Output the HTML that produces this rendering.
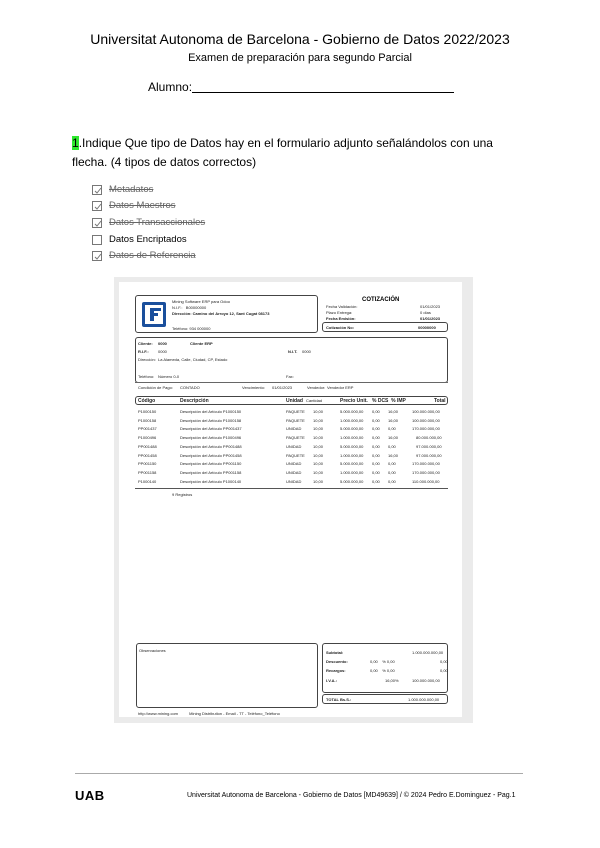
<!DOCTYPE html>
<html><head><meta charset="utf-8"><style>
*{margin:0;padding:0;box-sizing:border-box}
body{width:600px;height:848px;background:#fff;position:relative;font-family:"Liberation Sans",sans-serif;color:#000;overflow:hidden}
.a{position:absolute;white-space:nowrap}
.cb{position:absolute;width:10px;height:10px;border:1px solid #777;left:92px}
.cb svg{position:absolute;left:0;top:0}
.lbl{position:absolute;left:109px;font-size:9.5px;color:#666;text-decoration:line-through}
.t{font-size:4px;color:#222}
.box{position:absolute;border:1px solid #444;border-radius:3px}
.row{position:absolute;left:0;height:8px;font-size:4px;color:#222}
.row span{position:absolute;white-space:nowrap}
</style></head><body>
<div class="a" style="left:0;width:600px;text-align:center;top:31px;font-size:14px">Universitat Autonoma de Barcelona - Gobierno de Datos 2022/2023</div>
<div class="a" style="left:0;width:600px;text-align:center;top:52px;font-size:11px">Examen de preparación para segundo Parcial</div>
<div class="a" style="left:148px;top:80px;font-size:12px">Alumno:</div>
<div class="a" style="left:192px;top:92px;width:262px;border-top:1px solid #000"></div>

<div class="a" style="left:72px;top:136px;font-size:12px"><span style="background:#2ee82e">1</span>.Indique Que tipo de Datos hay en el formulario adjunto señalándolos con una</div>
<div class="a" style="left:72px;top:155px;font-size:12px">flecha. (4 tipos de datos correctos)</div>

<div class="cb" style="top:185px"><svg width="10" height="10"><path d="M2 5l2 2 4-5" stroke="#777" fill="none"/></svg></div>
<div class="lbl" style="top:184px">Metadatos</div>
<div class="cb" style="top:201px"><svg width="10" height="10"><path d="M2 5l2 2 4-5" stroke="#777" fill="none"/></svg></div>
<div class="lbl" style="top:200px">Datos Maestros</div>
<div class="cb" style="top:218px"><svg width="10" height="10"><path d="M2 5l2 2 4-5" stroke="#777" fill="none"/></svg></div>
<div class="lbl" style="top:217px">Datos Transaccionales</div>
<div class="cb" style="top:235px"></div>
<div class="lbl" style="top:234px;color:#000;text-decoration:none">Datos Encriptados</div>
<div class="cb" style="top:251px"><svg width="10" height="10"><path d="M2 5l2 2 4-5" stroke="#777" fill="none"/></svg></div>
<div class="lbl" style="top:250px">Datos de Referencia</div>

<!-- image -->
<div class="a" style="left:114px;top:277px;width:359px;height:446px;background:#ebebeb"></div>
<div class="a" style="left:119px;top:282px;width:343px;height:435px;background:#fff"></div>

<div class="box" style="left:135px;top:295px;width:183px;height:38px"></div>
<div class="a" style="left:142px;top:302px;width:24px;height:25px;background:#1a4f9c;border-radius:2px"></div>
<div class="a" style="left:145px;top:305px;width:18px;height:19px;background:#fff"></div>
<div class="a" style="left:150px;top:308px;width:11px;height:13px;border-left:4px solid #1a4f9c;border-top:3px solid #1a4f9c"></div>
<div class="a" style="left:150px;top:313px;width:8px;height:3px;background:#1a4f9c"></div>
<div class="a t" style="left:172px;top:299px">Mining Software ERP para Odoo</div>
<div class="a t" style="left:172px;top:305px">N.I.F.: &nbsp; B00000000</div>
<div class="a t" style="left:172px;top:311px;font-weight:bold">Dirección: Camino del Arroyo 12, Sant Cugat 08173</div>
<div class="a t" style="left:172px;top:326px">Teléfono: 934 000000</div>
<div class="a" style="left:362px;top:297px;font-size:6px;font-weight:bold">COTIZACIÓN</div>
<div class="a t" style="left:326px;top:304px">Fecha Validación:</div><div class="a t" style="left:420px;top:304px">01/01/2023</div>
<div class="a t" style="left:326px;top:310px">Plazo Entrega:</div><div class="a t" style="left:420px;top:310px">0 días</div>
<div class="a t" style="left:326px;top:316px;font-weight:bold">Fecha Emisión:</div><div class="a t" style="left:420px;top:316px;font-weight:bold">01/01/2023</div>
<div class="box" style="left:322px;top:322px;width:126px;height:10px"></div>
<div class="a t" style="left:326px;top:325px;font-weight:bold">Cotización No:</div><div class="a t" style="left:418px;top:325px;font-weight:bold">00000000</div>

<div class="box" style="left:135px;top:337px;width:313px;height:46px"></div>
<div class="a t" style="left:138px;top:341px;font-weight:bold">Cliente:</div><div class="a t" style="left:158px;top:341px;font-weight:bold">0000</div><div class="a t" style="left:190px;top:341px;font-weight:bold">Cliente ERP</div>
<div class="a t" style="left:138px;top:349px;font-weight:bold">R.I.F.:</div><div class="a t" style="left:158px;top:349px">0000</div>
<div class="a t" style="left:288px;top:349px;font-weight:bold">N.I.T.</div><div class="a t" style="left:302px;top:349px">0000</div>
<div class="a t" style="left:138px;top:357px">Dirección:</div><div class="a t" style="left:158px;top:357px">La Alameda, Calle, Ciudad, CP, Estado</div>
<div class="a t" style="left:138px;top:374px">Teléfono:</div><div class="a t" style="left:158px;top:374px">Número 0-0</div><div class="a t" style="left:286px;top:374px">Fax:</div>
<div class="a" style="left:135px;top:382px;width:313px;border-top:1px solid #666"></div>
<div class="a t" style="left:138px;top:385px">Condición de Pago:</div><div class="a t" style="left:180px;top:385px">CONTADO</div>
<div class="a t" style="left:242px;top:385px">Vencimiento:</div><div class="a t" style="left:272px;top:385px">01/01/2023</div>
<div class="a t" style="left:307px;top:385px">Vendedor:</div><div class="a t" style="left:327px;top:385px">Vendedor ERP</div>

<div class="box" style="left:135px;top:396px;width:313px;height:9px"></div>
<div class="a t" style="left:138px;top:398px;font-weight:bold;font-size:5px">Código</div>
<div class="a t" style="left:180px;top:398px;font-weight:bold;font-size:5px">Descripción</div>
<div class="a t" style="left:286px;top:398px;font-weight:bold;font-size:5px">Unidad</div>
<div class="a t" style="left:306px;top:398px">Cantidad</div>
<div class="a t" style="left:340px;top:398px;font-weight:bold;font-size:5px">Precio Unit.</div>
<div class="a t" style="left:372px;top:398px;font-weight:bold;font-size:5px">% DCS &nbsp;% IMP</div>
<div class="a t" style="left:434px;top:398px;font-weight:bold;font-size:5px">Total</div>

<div class="a" style="left:0;top:409px;width:600px;height:80px">
<div class="row" style="top:0"><span style="left:138px">P1000150</span><span style="left:180px">Descripción del Artículo P1000150</span><span style="left:286px">PAQUETE</span><span style="left:313px">10,00</span><span style="left:340px">5.000.000,00</span><span style="left:372px">0,00</span><span style="left:388px">16,00</span><span style="left:412px">100.000.000,00</span></div>
<div class="row" style="top:8.7px"><span style="left:138px">P1000158</span><span style="left:180px">Descripción del Artículo P1000158</span><span style="left:286px">PAQUETE</span><span style="left:313px">10,00</span><span style="left:340px">1.000.000,00</span><span style="left:372px">0,00</span><span style="left:388px">16,00</span><span style="left:412px">100.000.000,00</span></div>
<div class="row" style="top:17.4px"><span style="left:138px">PP001437</span><span style="left:180px">Descripción del Artículo PP001437</span><span style="left:286px">UNIDAD</span><span style="left:313px">10,00</span><span style="left:340px">5.000.000,00</span><span style="left:372px">0,00</span><span style="left:388px">0,00</span><span style="left:412px">170.000.000,00</span></div>
<div class="row" style="top:26.1px"><span style="left:138px">P1000496</span><span style="left:180px">Descripción del Artículo P1000496</span><span style="left:286px">PAQUETE</span><span style="left:313px">10,00</span><span style="left:340px">1.000.000,00</span><span style="left:372px">0,00</span><span style="left:388px">16,00</span><span style="left:416px">80.000.000,00</span></div>
<div class="row" style="top:34.8px"><span style="left:138px">PP001488</span><span style="left:180px">Descripción del Artículo PP001488</span><span style="left:286px">UNIDAD</span><span style="left:313px">10,00</span><span style="left:340px">5.000.000,00</span><span style="left:372px">0,00</span><span style="left:388px">0,00</span><span style="left:416px">97.000.000,00</span></div>
<div class="row" style="top:43.5px"><span style="left:138px">PP001458</span><span style="left:180px">Descripción del Artículo PP001458</span><span style="left:286px">PAQUETE</span><span style="left:313px">10,00</span><span style="left:340px">1.000.000,00</span><span style="left:372px">0,00</span><span style="left:388px">16,00</span><span style="left:416px">97.000.000,00</span></div>
<div class="row" style="top:52.2px"><span style="left:138px">PP001150</span><span style="left:180px">Descripción del Artículo PP001150</span><span style="left:286px">UNIDAD</span><span style="left:313px">10,00</span><span style="left:340px">5.000.000,00</span><span style="left:372px">0,00</span><span style="left:388px">0,00</span><span style="left:412px">170.000.000,00</span></div>
<div class="row" style="top:60.9px"><span style="left:138px">PP001158</span><span style="left:180px">Descripción del Artículo PP001158</span><span style="left:286px">UNIDAD</span><span style="left:313px">10,00</span><span style="left:340px">1.000.000,00</span><span style="left:372px">0,00</span><span style="left:388px">0,00</span><span style="left:412px">170.000.000,00</span></div>
<div class="row" style="top:69.6px"><span style="left:138px">P1000140</span><span style="left:180px">Descripción del Artículo P1000140</span><span style="left:286px">UNIDAD</span><span style="left:313px">10,00</span><span style="left:340px">5.000.000,00</span><span style="left:372px">0,00</span><span style="left:388px">0,00</span><span style="left:412px">110.000.000,00</span></div>
</div>
<div class="a" style="left:135px;top:488px;width:313px;border-top:1px solid #555"></div>
<div class="a t" style="left:172px;top:492px">9 Registros</div>

<div class="box" style="left:136px;top:643px;width:182px;height:65px"></div>
<div class="a t" style="left:139px;top:648px">Observaciones</div>
<div class="box" style="left:322px;top:643px;width:126px;height:50px"></div>
<div class="a t" style="left:326px;top:650px;font-weight:bold">Subtotal:</div><div class="a t" style="left:412px;top:650px">1.000.000.000,00</div>
<div class="a t" style="left:326px;top:659px;font-weight:bold">Descuento:</div><div class="a t" style="left:370px;top:659px">0,00 &nbsp;&nbsp; % 0,00</div><div class="a t" style="left:440px;top:659px">0,00</div>
<div class="a t" style="left:326px;top:668px;font-weight:bold">Recargos:</div><div class="a t" style="left:370px;top:668px">0,00 &nbsp;&nbsp; % 0,00</div><div class="a t" style="left:440px;top:668px">0,00</div>
<div class="a t" style="left:326px;top:678px;font-weight:bold">I.V.A.:</div><div class="a t" style="left:385px;top:678px">16,00%</div><div class="a t" style="left:412px;top:678px">100.000.000,00</div>
<div class="box" style="left:322px;top:694px;width:126px;height:10px"></div>
<div class="a t" style="left:326px;top:697px;font-weight:bold">TOTAL Bs.S.:</div><div class="a t" style="left:408px;top:697px">1.000.000.000,00</div>
<div class="a t" style="left:138px;top:711px">http://www.mining.com &nbsp;&nbsp;&nbsp;&nbsp;&nbsp;&nbsp;&nbsp;&nbsp; Mining Distribution - Email - TT - Teléfono_Teléfono</div>

<div class="a" style="left:75px;top:773px;width:448px;border-top:1px solid #aaa"></div>
<div class="a" style="left:75px;top:788px;font-size:13px;font-weight:bold;letter-spacing:0.5px">UAB</div>
<div class="a" style="left:187px;top:792px;font-size:7px">Universitat Autonoma de Barcelona - Gobierno de Datos [MD49639] / © 2024 Pedro E.Dominguez - Pag.1</div>
</body></html>
